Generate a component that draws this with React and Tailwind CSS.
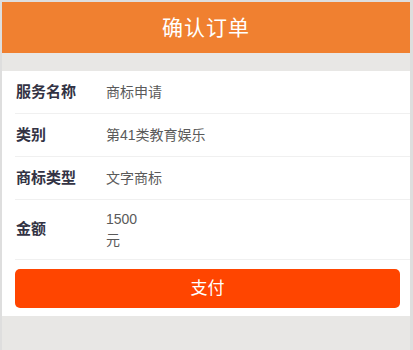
import React from "react";

const rows = [
  { label: "服务名称", value: "商标申请" },
  { label: "类别", value: "第41类教育娱乐" },
  { label: "商标类型", value: "文字商标" },
];

const App = () => {
  return (
    <div
      className="min-h-[350px] bg-[#dedede] pl-[2px] pt-[2px] pr-[3px]"
      style={{ fontFamily: '"Liberation Sans", "Noto Sans CJK SC", sans-serif' }}
    >
      <div className="min-h-[348px] bg-[#e8e7e5]">
        {/* header */}
        <div className="h-[51px] bg-[#f08030] flex items-center justify-center">
          <h1 className="text-[21px] text-white tracking-[1px]">确认订单</h1>
        </div>

        <div className="mt-[18px] bg-white pb-[8px]">
          {rows.map((row) => (
            <div
              key={row.label}
              className="ml-[13px] h-[43px] flex items-center border-b border-[#f0f0f0]"
            >
              <div className="w-[91px] pl-[1px] text-[15px] font-bold text-[#333344]">
                {row.label}
              </div>
              <div className="text-[14px] text-[#5a5a5a]">{row.value}</div>
            </div>
          ))}
          <div className="ml-[13px] h-[60px] flex items-center border-b border-[#f0f0f0]">
            <div className="w-[91px] pl-[1px] text-[15px] font-bold text-[#333344]">金额</div>
            <div className="text-[14px] text-[#5a5a5a] leading-[21px]">
              <div>1500</div>
              <div>元</div>
            </div>
          </div>

          <div className="pl-[13px] pr-[10px] pt-[9px]">
            <button className="w-full h-[39px] rounded-[5px] bg-[#ff4500] text-white text-[17px]">
              支付
            </button>
          </div>
        </div>
      </div>
    </div>
  );
};

export default App;
